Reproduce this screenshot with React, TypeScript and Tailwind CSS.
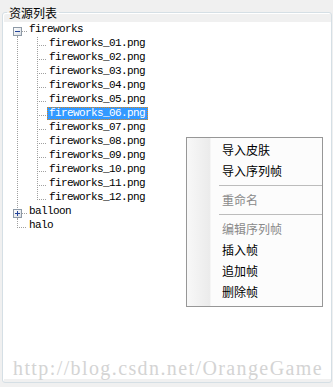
import React from "react";

type Kind = "rootOpen" | "child" | "childLast" | "rootClosed" | "rootLast";

const DOT = "#a0a0a0";

function Box({ plus }: { plus: boolean }) {
  return (
    <g>
      <rect x={10.5} y={4.5} width={8} height={8} fill="url(#boxg)" stroke="#8d99a6" />
      <path d="M12 8.5H17" stroke="#24449a" />
      {plus && <path d="M14.5 6V11" stroke="#24449a" />}
    </g>
  );
}

function Gutter({ kind }: { kind: Kind }) {
  const isChild = kind === "child" || kind === "childLast";
  const w = isChild ? 44 : 24;
  return (
    <svg width={w} height={14} className="shrink-0 block" shapeRendering="crispEdges">
      <defs>
        <linearGradient id="boxg" x1="0" y1="0" x2="1" y2="1">
          <stop offset="0" stopColor="#ffffff" />
          <stop offset="1" stopColor="#d8dce2" />
        </linearGradient>
      </defs>
      {kind === "rootOpen" && (
        <>
          <path d="M14.5 13V14" stroke={DOT} strokeDasharray="1 1" />
          <path d="M19 8.5H24" stroke={DOT} strokeDasharray="1 1" />
          <Box plus={false} />
        </>
      )}
      {kind === "rootClosed" && (
        <>
          <path d="M14.5 0V4" stroke={DOT} strokeDasharray="1 1" />
          <path d="M14.5 13V14" stroke={DOT} strokeDasharray="1 1" />
          <path d="M19 8.5H24" stroke={DOT} strokeDasharray="1 1" />
          <Box plus={true} />
        </>
      )}
      {kind === "rootLast" && (
        <>
          <path d="M14.5 0V9" stroke={DOT} strokeDasharray="1 1" />
          <path d="M16 8.5H24" stroke={DOT} strokeDasharray="1 1" />
        </>
      )}
      {isChild && (
        <>
          <path d="M14.5 0V14" stroke={DOT} strokeDasharray="1 1" />
          <path d={kind === "childLast" ? "M34.5 0V9" : "M34.5 0V14"} stroke={DOT} strokeDasharray="1 1" />
          <path d="M36 8.5H44" stroke={DOT} strokeDasharray="1 1" />
        </>
      )}
    </svg>
  );
}

const rows: { kind: Kind; label: string; selected?: boolean }[] = [
  { kind: "rootOpen", label: "fireworks" },
  { kind: "child", label: "fireworks_01.png" },
  { kind: "child", label: "fireworks_02.png" },
  { kind: "child", label: "fireworks_03.png" },
  { kind: "child", label: "fireworks_04.png" },
  { kind: "child", label: "fireworks_05.png" },
  { kind: "child", label: "fireworks_06.png", selected: true },
  { kind: "child", label: "fireworks_07.png" },
  { kind: "child", label: "fireworks_08.png" },
  { kind: "child", label: "fireworks_09.png" },
  { kind: "child", label: "fireworks_10.png" },
  { kind: "child", label: "fireworks_11.png" },
  { kind: "childLast", label: "fireworks_12.png" },
  { kind: "rootClosed", label: "balloon" },
  { kind: "rootLast", label: "halo" },
];

type MenuEntry = { sep: true } | { sep?: false; text: string; disabled?: boolean };

const menu: MenuEntry[] = [
  { text: "导入皮肤" },
  { text: "导入序列帧" },
  { sep: true },
  { text: "重命名", disabled: true },
  { sep: true },
  { text: "编辑序列帧", disabled: true },
  { text: "插入帧" },
  { text: "追加帧" },
  { text: "删除帧" },
];

const CJK = "font-['Noto_Sans_CJK_SC','Noto_Sans',sans-serif]";

export default function App() {
  return (
    <div className="relative w-[333px] h-[387px] bg-[#f0f0f0] overflow-hidden pt-[4px]">
      <fieldset className="ml-[2px] w-[330px] h-[379px] border border-[#d5dfe5] rounded-[3px] pb-[3px] shadow-[inset_1px_1px_0_#ffffff]">
        <legend className={`ml-[4px] px-[2px] text-[12px] leading-[17px] text-black ${CJK}`}>资源列表</legend>
        <div className="mt-px h-[357px] bg-white flex flex-col justify-between pt-px">
          <div className="flex flex-col font-['Liberation_Mono',monospace] text-[11px] tracking-[-0.6px] text-black">
            {rows.map((r, i) => (
              <div key={i} className="flex h-[14px] items-start">
                <Gutter kind={r.kind} />
                <span
                  className={`h-[13px] box-border border pl-px pr-[2px] leading-[11px] whitespace-pre ${
                    r.selected
                      ? "bg-[#3399ff] text-white border-dotted border-[#d9861c]"
                      : "border-transparent"
                  }`}
                >
                  {r.label}
                </span>
              </div>
            ))}
          </div>
          <div className="pl-[10px] pb-px font-['Liberation_Serif',serif] text-[20px] leading-[20px] tracking-[1.4px] text-[#d4d4d4] whitespace-nowrap">
            http://blog.csdn.net/OrangeGame
          </div>
        </div>
      </fieldset>

      <div className="absolute left-[186px] top-[137px] w-[137px] h-[170px] border border-[#979797] bg-[#fcfcfc] flex">
        <div className="w-[24px] h-full bg-gradient-to-r from-[#f8f8f8] to-[#ebebeb] border-r border-[#f5f5f5]" />
        <div className={`flex-1 flex flex-col pt-px pb-[4px] ${CJK} text-[12px]`}>
          {menu.map((m, i) =>
            m.sep ? (
              <div key={i} className="h-[8px] pt-[4px] pl-[8px]">
                <div className="h-px bg-[#bcbcbc]" />
              </div>
            ) : (
              <div
                key={i}
                className={`h-[21px] leading-[21px] pl-[11px] ${m.disabled ? "text-[#8a8a8a]" : "text-black"}`}
              >
                {m.text}
              </div>
            )
          )}
        </div>
      </div>
    </div>
  );
}
